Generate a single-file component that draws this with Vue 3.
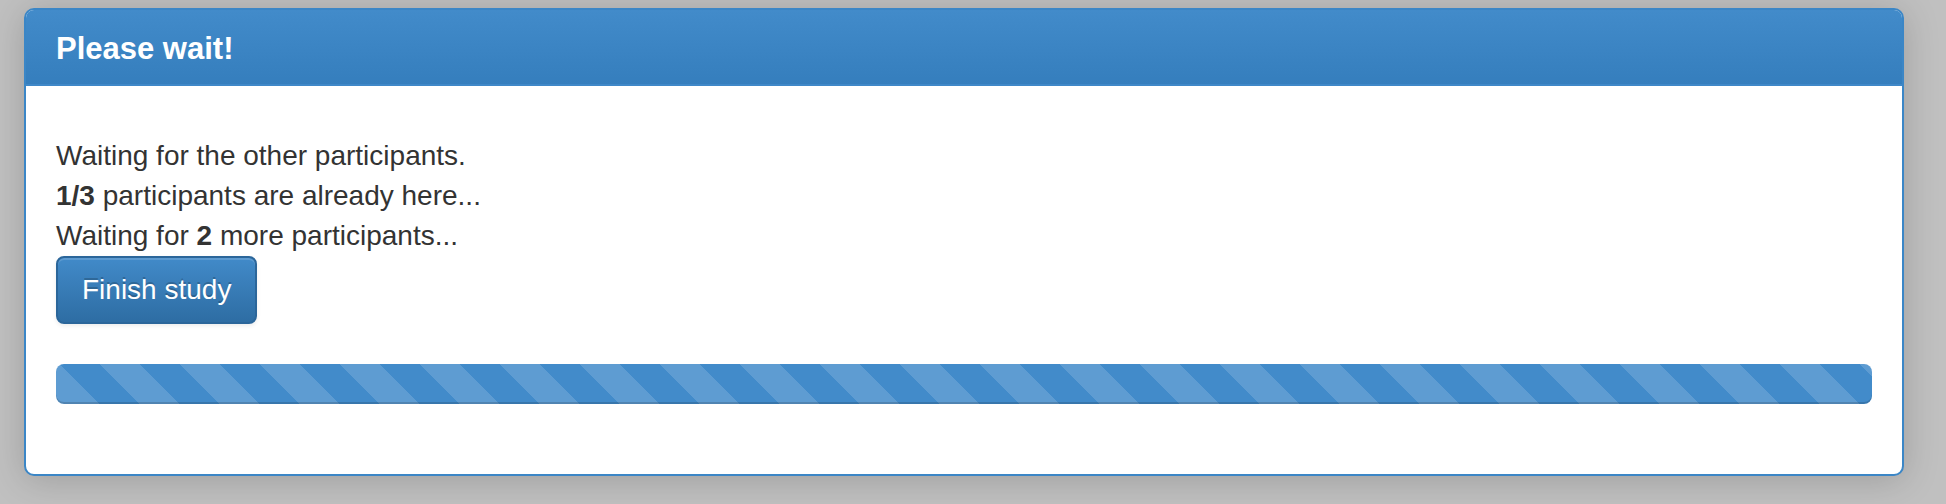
<script setup>
import { ref, computed } from 'vue'

const present = ref(1)
const required = ref(3)
const missing = computed(() => required.value - present.value)
</script>

<template>
  <main class="backdrop">
    <section class="panel" aria-labelledby="wait-title">
      <header class="panel-heading">
        <h3 id="wait-title" class="panel-title">Please wait!</h3>
      </header>
      <div class="panel-body">
        <p class="status">
          Waiting for the other participants.<br />
          <b>{{ present }}/{{ required }}</b> participants are already here...<br />
          Waiting for <b>{{ missing }}</b> more participants...
        </p>
        <button type="button" class="btn">Finish study</button>
        <div class="progress" role="progressbar" aria-label="Waiting for participants"></div>
      </div>
    </section>
  </main>
</template>

<style>
body {
  margin: 0;
  background: #c0c0c0;
}
</style>

<style scoped>
.backdrop {
  padding: 8px 42px 28px 24px;
  color: #333;
  font-family: "Helvetica Neue", Helvetica, "Liberation Sans", Arial, sans-serif;
  font-size: 28px;
  line-height: 40px;
}

.panel {
  border: 2px solid #3b86c6;
  border-radius: 10px;
  background: #fff;
  box-shadow: 0 4px 36px rgba(0, 0, 0, 0.18);
}

.panel-heading {
  padding: 22px 30px 18px;
  border-bottom: 2px solid #3f88c8;
  border-radius: 8px 8px 0 0;
  background: linear-gradient(#428bca, #357ebd);
  color: #fff;
}

.panel-title {
  margin: 0;
  font-size: 31px;
  font-weight: bold;
  line-height: 34px;
}

.panel-body {
  padding: 50px 30px 70px;
}

.status {
  margin: 0;
}

.btn {
  display: block;
  padding: 12px 24px;
  border: 2px solid #2b669a;
  border-radius: 8px;
  background: linear-gradient(#428bca, #2d6ca2) border-box;
  box-shadow: inset 0 2px 0 rgba(255, 255, 255, 0.15), 0 2px 4px rgba(0, 0, 0, 0.075);
  color: #fff;
  font: inherit;
  text-shadow: 0 -2px 0 rgba(0, 0, 0, 0.2);
  cursor: pointer;
}

.progress {
  height: 40px;
  margin-top: 40px;
  border-radius: 8px;
  background-color: #428bca;
  background-image: linear-gradient(
    45deg,
    rgba(255, 255, 255, 0.15) 25%,
    transparent 25%,
    transparent 50%,
    rgba(255, 255, 255, 0.15) 50%,
    rgba(255, 255, 255, 0.15) 75%,
    transparent 75%
  );
  background-position: 44px 0;
  background-size: 80px 80px;
  box-shadow: inset 0 -2px 0 rgba(0, 0, 0, 0.15);
}
</style>
